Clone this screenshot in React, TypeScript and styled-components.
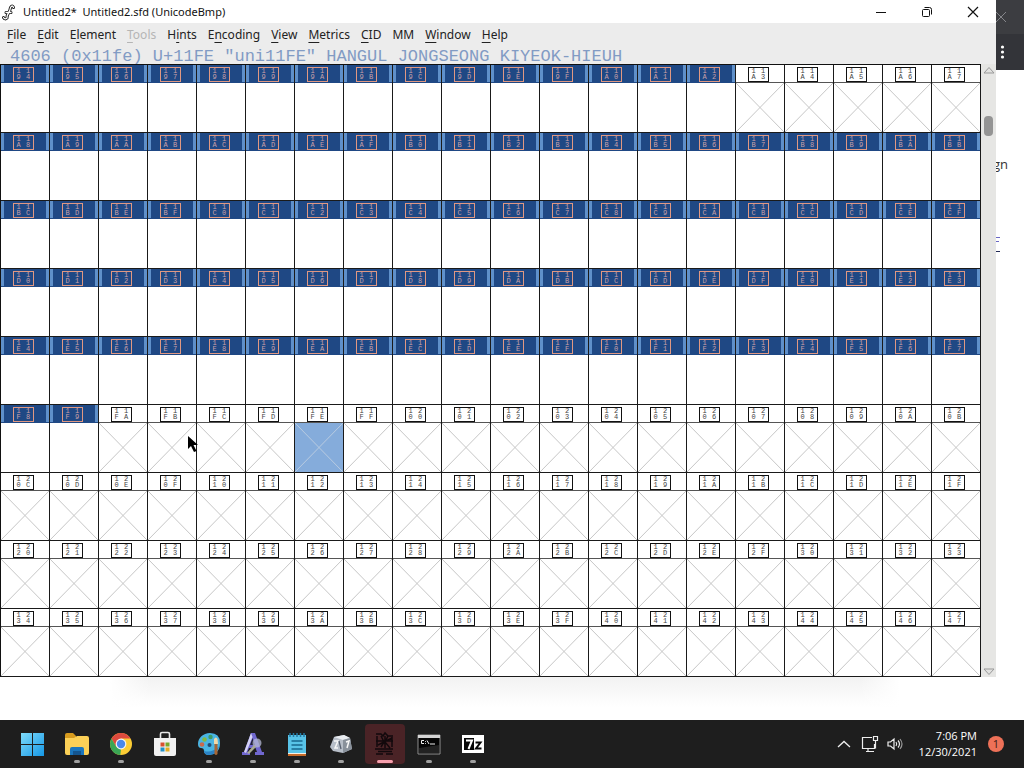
import React from "react";
import styled, { createGlobalStyle, css } from "styled-components";

const Global = createGlobalStyle`
  *, *::before, *::after { box-sizing: border-box; }
  body { margin: 0; background: #fff; }
  button { font: inherit; color: inherit; background: none; border: 0; padding: 0; }
`;

const Desktop = styled.div`
  min-height: 100vh;
  display: flex;
  flex-direction: column;
  background: #fff;
  font-family: "Open Sans", "Liberation Sans", sans-serif;
  color: #111;
`;

const Workspace = styled.div`
  flex: 1;
  display: grid;
  grid-template-columns: minmax(0, 1fr) 28px;
`;

const Foreground = styled.div`
  display: flex;
  flex-direction: column;
`;

const AppWindow = styled.main`
  background: #ececec;
`;

const TitleBar = styled.header`
  height: 23px;
  display: flex;
  align-items: center;
  background: #fff;
  padding-left: 1px;
`;

const Title = styled.h1`
  flex: 1;
  margin: 0;
  padding-left: 6px;
  font-family: "Noto Sans", sans-serif;
  font-size: 11px;
  line-height: 16px;
  font-weight: 400;
  white-space: pre;
`;

const Caption = styled.button`
  width: 46px;
  height: 22px;
  display: grid;
  place-items: center;
`;

const MenuBar = styled.nav`
  height: 24px;
  display: flex;
  align-items: center;
  gap: 11px;
  padding-left: 7px;
  font-family: "Noto Sans", sans-serif;
  font-size: 12px;
  line-height: 18px;
  color: #222;
`;

const MenuButton = styled.button`
  &:disabled { color: #b5b5b5; }
  u { text-underline-offset: 3px; }
`;

const Status = styled.p`
  margin: 0;
  height: 17px;
  padding-left: 10px;
  font-family: "Liberation Mono", monospace;
  font-size: 17px;
  line-height: 19px;
  color: #829bc4;
  white-space: nowrap;
`;

const Body = styled.div`
  display: grid;
  grid-template-columns: minmax(0, 1fr) 15px;
`;

const Sheet = styled.div`
  display: grid;
  grid-template-columns: repeat(20, minmax(0, 1fr));
  border-top: 1px solid #111;
  border-left: 1px solid #111;
  background: #fff;
`;

const Cell = styled.div`
  height: 68px;
  display: flex;
  flex-direction: column;
  border-right: 1px solid #1a1a1a;
  border-bottom: 1px solid #1a1a1a;
`;

const Head = styled.div<{ $filled: boolean }>`
  height: 18px;
  padding: 2px 0 0 12px;
  border-bottom: 1px solid #555;
  ${(p) =>
    p.$filled &&
    css`
      border-bottom-color: #1f4884;
      background: linear-gradient(90deg, #5f90ca 3px, #1f4884 3px calc(100% - 3px), #5f90ca calc(100% - 3px));
    `}
`;

const Code = styled.span<{ $filled: boolean }>`
  width: 21px;
  height: 15px;
  display: grid;
  grid-template-columns: 9px 10px;
  grid-template-rows: 6px 6px;
  justify-items: center;
  border: 1px solid ${(p) => (p.$filled ? "#e09882" : "#111")};
  color: ${(p) => (p.$filled ? "#c8a0a8" : "#444")};
  font-family: "Liberation Mono", monospace;
  font-size: 7px;
  line-height: 6px;
`;

const Glyph = styled.div<{ $current: boolean }>`
  flex: 1;
  min-height: 0;
  background: ${(p) => (p.$current ? "#85acdb" : "#fff")};
  color: ${(p) => (p.$current ? "#b9cbe0" : "#c6c6c6")};
  svg { display: block; width: 100%; height: 100%; }
`;

const ScrollBar = styled.div`
  display: flex;
  flex-direction: column;
  align-items: center;
  background: #e6e6e4;
`;

const ScrollArrow = styled.button`
  width: 14px;
  height: 11px;
  display: grid;
  place-items: center;
`;

const Track = styled.div`
  flex: 1;
  padding-top: 41px;
`;

const Thumb = styled.div`
  width: 9px;
  height: 20px;
  border-radius: 4px;
  background: #949494;
`;

const Shade = styled.div`
  height: 30px;
  margin: 0 96px 0 110px;
  background:
    linear-gradient(90deg, #fff, transparent 40px calc(100% - 40px), #fff),
    linear-gradient(#f2f2f2, #fff);
`;

const Behind = styled.aside`
  display: flex;
  flex-direction: column;
  overflow: hidden;
  font-size: 13px;
  line-height: 20px;
`;

const BrowserBar = styled.div<{ $tone: string; $h: number }>`
  height: ${(p) => p.$h}px;
  background: ${(p) => p.$tone};
  display: flex;
  align-items: center;
`;

const PageText = styled.p`
  margin: 84px 0 62px;
  text-indent: -3px;
  color: #333;
`;

const LinkEdge = styled.a`
  width: 4px;
  height: 16px;
  svg { display: block; }
`;

const TaskBar = styled.footer`
  height: 48px;
  display: flex;
  align-items: center;
  background: #1e1e1e;
  color: #fff;
  padding: 0 20px 0 11px;
`;

const Apps = styled.div`
  flex: 1;
  display: flex;
`;

const AppButton = styled.button<{ $active?: boolean; $open?: boolean }>`
  width: 44px;
  height: 48px;
  display: flex;
  flex-direction: column;
  align-items: center;
  padding-top: 4px;
  &::after {
    content: "";
    width: ${(p) => (p.$active ? 16 : 6)}px;
    height: 3px;
    margin-top: -4px;
    border-radius: 2px;
    background: ${(p) => (p.$active ? "#f7a0ae" : p.$open ? "#a0a0a0" : "transparent")};
  }
`;

const IconPlate = styled.span<{ $active?: boolean }>`
  width: 40px;
  height: 40px;
  display: grid;
  place-items: center;
  border-radius: 4px;
  background: ${(p) => (p.$active ? "#4a2326" : "transparent")};
`;

const Tray = styled.div`
  display: flex;
  align-items: center;
`;

const TrayButton = styled.button<{ $w: number }>`
  width: ${(p) => p.$w}px;
  height: 40px;
  display: grid;
  place-items: center;
`;

const Clock = styled.div`
  width: 71px;
  text-align: right;
  font-size: 11px;
  line-height: 16px;
`;

const Badge = styled.span`
  width: 16px;
  height: 16px;
  margin-left: 11px;
  border-radius: 50%;
  background: #ee7158;
  color: #3c1c17;
  font-size: 11px;
  line-height: 16px;
  text-align: center;
`;

const Pointer = styled.svg`
  position: absolute;
  left: 187px;
  top: 435px;
  pointer-events: none;
`;

const menus: [string, number][] = [
  ["File", 0], ["Edit", 0], ["Element", 1], ["Tools", 0], ["Hints", 1], ["Encoding", 1],
  ["View", 0], ["Metrics", 0], ["CID", 0], ["MM", -1], ["Window", 0], ["Help", 0],
];

const FIRST = 0x1194;
const CURRENT = 0x11fe;
const codes = Array.from({ length: 180 }, (_, i) => FIRST + i);
const hasGlyph = (c: number) => c <= 0x11a2 || (c >= 0x11a8 && c <= 0x11f9);

function GlyphCell({ code }: { code: number }) {
  const filled = hasGlyph(code);
  const digits = code.toString(16).toUpperCase().split("");
  return (
    <Cell>
      <Head $filled={filled}>
        <Code $filled={filled}>
          {digits.map((d, i) => <span key={i}>{d}</span>)}
        </Code>
      </Head>
      <Glyph $current={code === CURRENT}>
        {!filled && (
          <svg viewBox="0 0 48 49" preserveAspectRatio="none" aria-hidden="true">
            <path d="M0 0 48 49M48 0 0 49" stroke="currentColor" fill="none" />
          </svg>
        )}
      </Glyph>
    </Cell>
  );
}

const StartIcon = () => (
  <svg width="24" height="24" viewBox="0 0 24 24">
    <defs>
      <linearGradient id="win" gradientUnits="userSpaceOnUse" x1="0" y1="1" x2="23" y2="24">
        <stop offset="0" stopColor="#7fdcfb" /><stop offset="1" stopColor="#1597e5" />
      </linearGradient>
    </defs>
    <path fill="url(#win)" d="M0 1h11v11H0zM12 1h11v11H12zM0 13h11v11H0zM12 13h11v11H12z" />
  </svg>
);

const FolderIcon = () => (
  <svg width="26" height="24" viewBox="0 0 26 24">
    <path d="M1 3q0-2 2-2h6l3 3v5H1z" fill="#d79b1e" />
    <path d="M1 6h9l3-2h10q2 0 2 2v15q0 2-2 2H3q-2 0-2-2z" fill="#fbd057" />
    <path d="M6 23v-6q0-2 2-2h10q2 0 2 2v6z" fill="#1b76bd" />
    <path d="M9 19h8v4H9z" fill="#14558f" />
  </svg>
);

const ChromeIcon = () => (
  <svg width="24" height="24" viewBox="0 0 24 24">
    <circle cx="12" cy="12" r="11" fill="#fbcc34" />
    <path d="M2.5 6.5A11 11 0 0 1 21.5 6.5H12L7.2 14.7z" fill="#dd4a3e" />
    <path d="M2.5 6.5 7.2 14.7 12 17.5 11.3 23A11 11 0 0 1 2.5 6.5z" fill="#3aa655" />
    <circle cx="12" cy="12" r="5.4" fill="#f4f4f4" />
    <circle cx="12" cy="12" r="4.2" fill="#4a88ea" />
  </svg>
);

const StoreIcon = () => (
  <svg width="24" height="26" viewBox="0 0 24 26">
    <path d="M7.500 8V3q0-1.500 1.500-1.500h6q1.500 0 1.500 1.500v5" fill="none" stroke="#e8e8e8" strokeWidth="1.600" />
    <path d="M1 7h22v16q0 2-2 2H3q-2 0-2-2z" fill="#f1f1f1" />
    <path d="M7.500 11.500h4v4h-4z" fill="#d85030" />
    <path d="M12.500 11.500h4v4h-4z" fill="#7aa82c" />
    <path d="M7.500 16.500h4v4h-4z" fill="#2391c8" />
    <path d="M12.500 16.500h4v4h-4z" fill="#e6ac22" />
  </svg>
);

const PaintIcon = () => (
  <svg width="24" height="24" viewBox="0 0 24 24">
    <path d="M13 1C6 1 1 6 1 12q0 4 3 4 3 0 3 3 0 4 5 4 11-1 11-12Q23 1 13 1z" fill="#49b5e3" />
    <path d="M7 18q1 2 3 1.500 6 .5 12-5-2 8-10 8.500-5 0-5-5z" fill="#2b83c6" />
    <circle cx="5" cy="12.500" r="2.300" fill="#c86a4c" />
    <circle cx="7.500" cy="7.500" r="2.300" fill="#83b945" />
    <circle cx="13.500" cy="5" r="2.200" fill="#3f9c63" />
    <circle cx="12.500" cy="13" r="2" fill="#244b70" />
    <path d="M17 7q2-3 3.500 0l.5 5h-4z" fill="#f0d8a8" />
    <path d="M17.500 12h3v10q-1.500 2-3 0z" fill="#a76635" />
  </svg>
);

const FontIcon = () => (
  <svg width="24" height="24" viewBox="0 0 24 24">
    <path d="M10 1h4l7 19h2v3h-9v-3h2l-1.500-4H8l-1.500 4H9v3H1v-3h2z" fill="#7067cf" />
    <path d="M9 13h5L11.500 6z" fill="#24233a" />
    <path d="M10 1 3 20l2 1 6.500-16z" fill="#d4d2f4" />
    <circle cx="16" cy="11" r="4.500" fill="#b5b9d5" opacity=".75" />
    <path d="M6 21 13 13l2 2-7 7z" fill="#a8aa94" />
  </svg>
);

const NotepadIcon = () => (
  <svg width="20" height="25" viewBox="0 0 20 25">
    <path d="M1 3h18v20H1z" fill="#58c3e8" />
    <path d="M3 1v4M6.500 1v4M10 1v4M13.500 1v4M17 1v4" stroke="#237ba5" strokeWidth="1.500" />
    <path d="M4.500 9h11M4.500 13h11M4.500 17h11" stroke="#17688f" strokeWidth="1.700" />
    <path d="M1 21h18v1H1z" fill="#f3f1e7" /><path d="M1 22h18v2H1z" fill="#c56b2b" />
  </svg>
);

const KeyIcon = () => (
  <svg width="24" height="20" viewBox="0 0 24 20">
    <path d="M5 3 15 1l6 3 2 11-9 4-10-2-3-4z" fill="#b7bec8" />
    <path d="M5 3 15 1l6 3-7 2z" fill="#e9edf1" />
    <path d="m14 6 7-2 2 11-9 4z" fill="#89919b" />
    <path d="M5 7h4l-3 7h3M17 8l3-1-2 7" fill="none" stroke="#f7f7f7" strokeWidth="1.500" />
    <path d="m10 7 2 8" stroke="#586170" strokeWidth="1.300" />
  </svg>
);

const ForgeIcon = () => (
  <svg width="24" height="26" viewBox="0 0 24 26">
    <path d="M3 3h5l2 2 2-3 3 3h5M4 5v11M8 5l3 6-3 5M12 5v12M15 5l-3 6 5 6M19 6v10M3 10h17M5 14l14-7M2 18h18M5 20.500h14M3 23h7m3 0h7" fill="none" stroke="#12090c" strokeWidth="1.500" />
  </svg>
);

const TerminalIcon = () => (
  <svg width="24" height="21" viewBox="0 0 24 21">
    <path d="M1 1h22v19H1z" fill="#050505" stroke="#8f8f8f" />
    <path d="M1 1h22v3H1z" fill="#d4d4d4" />
    <path d="M7 6.500H4.500v3H7M8.500 7v.8M8.500 9v.8M10 6.500l2 3.500M13 10h5" fill="none" stroke="#eee" />
    <path d="M2 14 22 11v8H2z" fill="#222" />
  </svg>
);

const ZipIcon = () => (
  <svg width="24" height="20" viewBox="0 0 24 20">
    <path d="M1 1h22v18H1z" fill="#fff" />
    <path d="M3 4h10v12H3z" fill="#080808" />
    <path d="M5 6.500h6L7.500 15" fill="none" stroke="#fff" strokeWidth="2" />
    <path d="M14.500 8.500h5l-4.500 6h5.500" fill="none" stroke="#080808" strokeWidth="2" />
  </svg>
);

const apps = [
  { name: "Start", Icon: StartIcon },
  { name: "File Explorer", Icon: FolderIcon, open: true },
  { name: "Chrome", Icon: ChromeIcon, open: true },
  { name: "Store", Icon: StoreIcon },
  { name: "Paint", Icon: PaintIcon, open: true },
  { name: "Font editor", Icon: FontIcon, open: true },
  { name: "Notepad", Icon: NotepadIcon, open: true },
  { name: "Keyboard", Icon: KeyIcon, open: true },
  { name: "FontForge", Icon: ForgeIcon, open: true, active: true },
  { name: "Terminal", Icon: TerminalIcon, open: true },
  { name: "Archiver", Icon: ZipIcon, open: true },
];

export default function App() {
  return (
    <Desktop>
      <Global />
      <Workspace>
        <Foreground>
          <AppWindow>
            <TitleBar>
              <svg width="16" height="18" viewBox="0 0 16 18" aria-hidden="true" fill="none" strokeLinecap="round">
                <path d="M12.500 4.500Q11.500 1.500 9.500 4.500 9 8 7.500 10T6 15Q4 17 2.500 14.500M5 9.500h5" stroke="#111" strokeWidth="3" />
                <path d="M12.500 4.500Q11.500 1.500 9.500 4.500 9 8 7.500 10T6 15Q4 17 2.500 14.500M5 9.500h5" stroke="#fff" strokeWidth="1.300" />
              </svg>
              <Title>{"Untitled2*  Untitled2.sfd (UnicodeBmp)"}</Title>
              <Caption aria-label="Minimize">
                <svg width="12" height="12"><path d="M1 6.500h10" stroke="#111" /></svg>
              </Caption>
              <Caption aria-label="Restore">
                <svg width="12" height="12" fill="none" stroke="#111">
                  <rect x="1.500" y="3.500" width="7" height="7" rx="1" />
                  <path d="M3.500 1.500h5q2 0 2 2v5" />
                </svg>
              </Caption>
              <Caption aria-label="Close">
                <svg width="12" height="12"><path d="m1 1 10 10M11 1 1 11" stroke="#111" strokeWidth="1.200" /></svg>
              </Caption>
            </TitleBar>
            <MenuBar>
              {menus.map(([label, key]) => (
                <MenuButton key={label} disabled={label === "Tools"}>
                  {key < 0 ? label : <>{label.slice(0, key)}<u>{label[key]}</u>{label.slice(key + 1)}</>}
                </MenuButton>
              ))}
            </MenuBar>
            <Status>4606 (0x11fe) U+11FE "uni11FE" HANGUL JONGSEONG KIYEOK-HIEUH</Status>
            <Body>
              <Sheet>
                {codes.map((c) => <GlyphCell key={c} code={c} />)}
              </Sheet>
              <ScrollBar>
                <ScrollArrow aria-label="Scroll up">
                  <svg width="12" height="8"><path d="M1 7h10L6 1.500z" fill="#e2e2e0" stroke="#999" /></svg>
                </ScrollArrow>
                <Track><Thumb /></Track>
                <ScrollArrow aria-label="Scroll down">
                  <svg width="12" height="8"><path d="M1 1h10L6 6.500z" fill="#e2e2e0" stroke="#999" /></svg>
                </ScrollArrow>
              </ScrollBar>
            </Body>
          </AppWindow>
          <Shade />
        </Foreground>
        <Behind>
          <BrowserBar $tone="#3c3d41" $h={34}>
            <svg width="12" height="12"><path d="m0 1 10 10M10 1 0 11" stroke="#85868a" /></svg>
          </BrowserBar>
          <BrowserBar $tone="#333439" $h={36}>
            <svg width="14" height="16" fill="#fff">
              <circle cx="6.500" cy="3" r="1.600" /><circle cx="6.500" cy="8" r="1.600" /><circle cx="6.500" cy="13" r="1.600" />
            </svg>
          </BrowserBar>
          <PageText>gn</PageText>
          <LinkEdge href="#" aria-label="Page link">
            <svg width="4" height="16"><path d="M0 1.500h4M0 5.500h3" stroke="#6a68c4" /><path d="M0 15.500h4" stroke="#222a55" /></svg>
          </LinkEdge>
        </Behind>
      </Workspace>
      <TaskBar>
        <Apps>
          {apps.map(({ name, Icon, open, active }) => (
            <AppButton key={name} aria-label={name} $open={open} $active={active}>
              <IconPlate $active={active}><Icon /></IconPlate>
            </AppButton>
          ))}
        </Apps>
        <Tray>
          <TrayButton $w={24} aria-label="Show hidden icons">
            <svg width="14" height="8"><path d="m1 7 6-5.500L13 7" fill="none" stroke="#eee" strokeWidth="1.300" /></svg>
          </TrayButton>
          <TrayButton $w={28} aria-label="Network">
            <svg width="18" height="18" viewBox="0 0 18 18" fill="none" stroke="#eee" strokeWidth="1.200">
              <path d="M11 2.500H1.500v11h12V9M5 16.500h8M7 13.500v3M12.500 1.500h4v4h-4zM14.500 5.500v8" />
            </svg>
          </TrayButton>
          <TrayButton $w={22} aria-label="Volume">
            <svg width="16" height="14" viewBox="0 0 16 14" fill="none" stroke="#eee" strokeWidth="1.200">
              <path d="M1 5h2.500L7 2v10L3.500 9H1zM9 5q1.500 2 0 4M11 3.500q3 3.500 0 7" /><path d="M13 2q4 5 0 10" stroke="#999" />
            </svg>
          </TrayButton>
          <Clock>7:06 PM<br />12/30/2021</Clock>
          <Badge>1</Badge>
        </Tray>
      </TaskBar>
      <Pointer width="12" height="18" viewBox="0 0 12 18" aria-hidden="true">
        <path d="M1 1v13l3-3 3 6 2.500-1-3-6H11z" fill="#000" />
      </Pointer>
    </Desktop>
  );
}
